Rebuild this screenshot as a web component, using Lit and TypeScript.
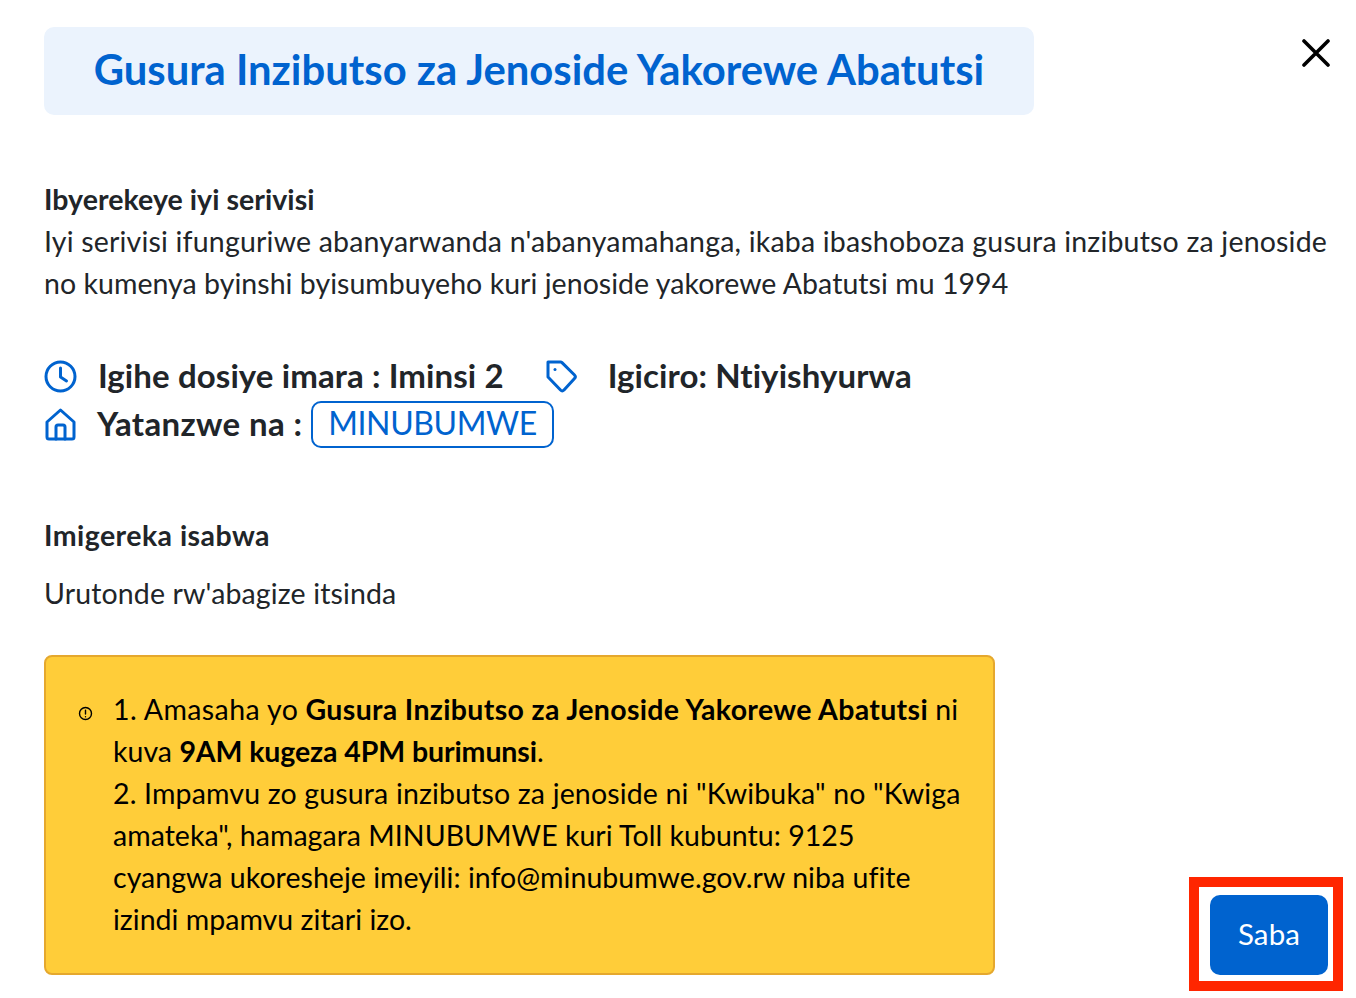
import { LitElement, html, css } from "lit";
import { customElement } from "lit/decorators.js";

@customElement("app-root")
export class AppRoot extends LitElement {
  static styles = css`
    :host {
      display: block;
      width: 1356px;
      height: 998px;
      overflow: hidden;
      background: #fff;
      color: #212529;
      font-family: "Lato", "Liberation Sans", sans-serif;
      font-size: 28.5px;
      letter-spacing: 0.14px;
      line-height: 42px;
    }
    .page {
      box-sizing: border-box;
      height: 998px;
      padding: 27px 0 0 44px;
      display: flex;
      flex-direction: column;
    }
    .head {
      display: flex;
      align-items: flex-start;
      justify-content: space-between;
      padding-right: 26px;
    }
    .title {
      box-sizing: border-box;
      width: 990px;
      height: 88px;
      padding-bottom: 5px;
      border-radius: 10px;
      background: #ebf3fd;
      color: #0063cf;
      font-size: 41.8px;
      letter-spacing: 0;
      font-weight: 700;
      display: flex;
      align-items: center;
      justify-content: center;
    }
    .close {
      width: 28px;
      height: 28px;
      margin-top: 12px;
      display: block;
    }
    .about {
      margin-top: 63px;
    }
    .strong {
      font-weight: 700;
    }
    .about .strong {
      letter-spacing: 0.05px;
    }
    .line-a {
      letter-spacing: 0.19px;
    }
    .line-b {
      letter-spacing: 0.04px;
    }
    .meta {
      margin-top: 48px;
      font-size: 33px;
      letter-spacing: 0.1px;
      font-weight: 700;
    }
    .row {
      display: flex;
      align-items: center;
      height: 48px;
    }
    .row span {
      padding-bottom: 2px;
    }
    .row svg {
      display: block;
      flex: none;
      color: #0063cf;
    }
    .clock {
      margin-right: 21px;
    }
    .tag {
      margin: 0 31px 0 41px;
    }
    .house {
      margin-right: 20px;
    }
    .by {
      letter-spacing: 0.35px;
    }
    .row .pill {
      box-sizing: border-box;
      height: 47px;
      padding: 0 15px 2px;
      margin-left: 9px;
      border: 2px solid #0063cf;
      border-radius: 10px;
      color: #0063cf;
      font-size: 32px;
      letter-spacing: -0.4px;
      font-weight: 400;
      display: flex;
      align-items: center;
    }
    .docs {
      margin-top: 66px;
    }
    .docs .strong {
      letter-spacing: 0.45px;
    }
    .doc {
      margin-top: 16px;
    }
    .bottom {
      margin-top: 41px;
      display: flex;
      align-items: flex-end;
      justify-content: space-between;
      padding-right: 28px;
    }
    .alert {
      box-sizing: border-box;
      width: 951px;
      height: 320px;
      padding: 31px 26px 0 32px;
      background: #ffcd39;
      border: 2px solid #e5a82e;
      border-radius: 8px;
      color: #000;
      display: flex;
      gap: 20px;
    }
    .alert svg {
      flex: none;
      margin-top: 18px;
      display: block;
    }
    .alert-text {
      flex: 1;
      letter-spacing: 0.03px;
    }
    .lead {
      letter-spacing: 0.4px;
    }
    .reason {
      letter-spacing: 0.16px;
    }
    .alert-text b {
      letter-spacing: 0.33px;
    }
    .alert-text b.hours {
      letter-spacing: -0.1px;
    }
    .send {
      position: relative;
      display: block;
    }
    .btn {
      box-sizing: border-box;
      display: flex;
      align-items: center;
      justify-content: center;
      width: 118px;
      height: 80px;
      padding-bottom: 2px;
      border-radius: 10px;
      background: #0063cf;
      color: #fff;
      font-size: 29.5px;
    }
    .mark {
      position: absolute;
      left: -21px;
      top: -18px;
      width: 154px;
      height: 114px;
      box-sizing: border-box;
      border: 10px solid #ff2600;
    }
  `;

  render() {
    return html`
      <div class="page">
        <div class="head">
          <div class="title">Gusura Inzibutso za Jenoside Yakorewe Abatutsi</div>
          <svg class="close" viewBox="0 0 28 28" fill="none" stroke="#000" stroke-width="3.6" stroke-linecap="round">
            <path d="M2 2 26 26M26 2 2 26" />
          </svg>
        </div>
        <div class="about">
          <div class="strong">Ibyerekeye iyi serivisi</div>
          <div>
            <span class="line-a">Iyi serivisi ifunguriwe abanyarwanda n'abanyamahanga, ikaba ibashoboza gusura inzibutso za jenoside</span><br />
            <span class="line-b">no kumenya byinshi byisumbuyeho kuri jenoside yakorewe Abatutsi mu 1994</span>
          </div>
        </div>
        <div class="meta">
          <div class="row">
            <svg class="clock" width="33" height="33" viewBox="0 0 33 33" fill="none" stroke="currentColor" stroke-width="3" stroke-linecap="round" stroke-linejoin="round">
              <circle cx="16.5" cy="16.5" r="14.5" /><path d="M16.5 8v9l6 4" />
            </svg>
            <span>Igihe dosiye imara : Iminsi 2</span>
            <svg class="tag" width="32" height="33" viewBox="0 0 32 33" fill="none" stroke="currentColor" stroke-width="3" stroke-linecap="round" stroke-linejoin="round">
              <path d="M3 2h12.500a2 2 0 0 1 1.500.6L29.500 15a2.500 2.500 0 0 1 0 3.500L19 30a2.500 2.500 0 0 1-3.500 0L3 17z" /><path d="M10 9.500v.1" />
            </svg>
            <span>Igiciro: Ntiyishyurwa</span>
          </div>
          <div class="row">
            <svg class="house" width="33" height="33" viewBox="0 0 33 33" fill="none" stroke="currentColor" stroke-width="3" stroke-linecap="round" stroke-linejoin="round">
              <path d="M3 14 16.500 2 30 14v15a2 2 0 0 1-2 2H5a2 2 0 0 1-2-2z" /><path d="M12 31V19a2 2 0 0 1 2-2h5a2 2 0 0 1 2 2v12" />
            </svg>
            <span class="by">Yatanzwe na :</span>
            <span class="pill">MINUBUMWE</span>
          </div>
        </div>
        <div class="docs">
          <div class="strong">Imigereka isabwa</div>
          <div class="doc">Urutonde rw'abagize itsinda</div>
        </div>
        <div class="bottom">
          <div class="alert">
            <svg width="15" height="15" viewBox="0 0 15 15" fill="none" stroke="#000" stroke-width="1.400" stroke-linecap="round">
              <circle cx="7.500" cy="7.500" r="6" /><path d="M7.500 4.200v3.800M7.500 10.700v.1" />
            </svg>
            <div class="alert-text">
              <span class="lead">1. Amasaha yo</span> <b>Gusura Inzibutso za Jenoside Yakorewe Abatutsi</b> ni kuva <b class="hours">9AM kugeza 4PM burimunsi</b>.<br />
              <span class="reason">2. Impamvu zo gusura inzibutso za jenoside ni "Kwibuka" no "Kwiga</span> amateka", hamagara MINUBUMWE kuri Toll kubuntu: 9125 cyangwa ukoresheje imeyili: info@minubumwe.gov.rw niba ufite izindi mpamvu zitari izo.
            </div>
          </div>
          <div class="send">
            <div class="btn">Saba</div>
            <div class="mark"></div>
          </div>
        </div>
      </div>
    `;
  }
}
